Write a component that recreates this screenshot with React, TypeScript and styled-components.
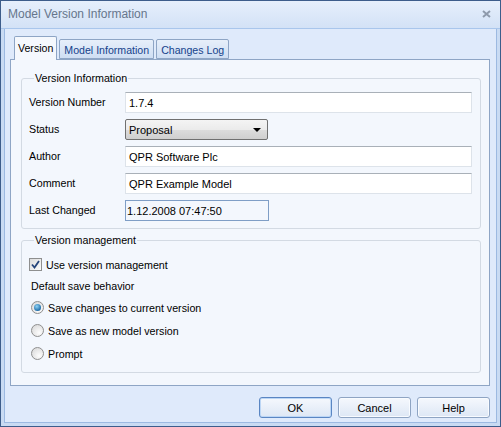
import styled, { createGlobalStyle } from 'styled-components';

const GlobalStyle = createGlobalStyle`
    html, body {
        margin: 0;
        padding: 0;
        background: #dfeafb;
    }

    body {
        font-family: "Liberation Sans", Arial, sans-serif;
        font-size: 10.7px;
        color: #000;
    }
`;

const Window = styled.div`
    width: 501px;
    height: 427px;
    box-sizing: border-box;
    border: 1px solid #3d5d8b;
    display: flex;
    flex-direction: column;
    background: #dfeafb;
`;

const TitleBar = styled.div`
    height: 28px;
    box-sizing: border-box;
    display: flex;
    align-items: center;
    justify-content: space-between;
    padding: 0 9px 1px 7px;
    background: linear-gradient(#e6effc, #d3e2f6);
    border-bottom: 1px solid #a9c6ec;
    font-size: 12px;
    color: #66768c;
`;

const Body = styled.div`
    flex: 1;
    display: flex;
    flex-direction: column;
    border: 3px solid #c9dbf3;
    border-top: none;
    box-shadow: inset 1px 0 #9cb9e1, inset -1px 0 #9cb9e1, inset 0 -1px #9cb9e1;
    padding: 7px 7px 5px 6px;
`;

const TabStrip = styled.div`
    display: flex;
    align-items: flex-end;
    gap: 2px;
    padding-left: 4px;
    height: 23px;
    position: relative;
    z-index: 1;
`;

const Tab = styled.div<{ $active?: boolean }>`
    box-sizing: border-box;
    height: ${p => (p.$active ? '24px' : '20px')};
    margin-bottom: ${p => (p.$active ? '-1px' : '0')};
    padding: ${p => (p.$active ? '0 3px 1px' : '1px 4px 0')};
    display: flex;
    align-items: center;
    border: 1px solid #8ea5c5;
    border-bottom: ${p => (p.$active ? 'none' : '1px solid #8ea5c5')};
    border-radius: 2px 2px 0 0;
    background: ${p => (p.$active ? '#f5f8fd' : 'linear-gradient(#e7effa, #cfdef3)')};
    color: ${p => (p.$active ? '#000' : '#15428b')};
    font-size: 10.6px;
`;

const Panel = styled.div`
    height: 327px;
    box-sizing: border-box;
    border: 1px solid #8ea5c5;
    background: #f3f7fd;
    padding: 12px 8px 0 10px;
    display: flex;
    flex-direction: column;
    gap: 5px;
`;

const Group = styled.fieldset`
    margin: 0;
    border: 1px solid #d3dae3;
    border-radius: 3px;
    padding: 0 8px 7px 7px;
`;

const Legend = styled.legend`
    padding: 0 1px;
    margin-left: 5px;
    line-height: 13px;
`;

const FieldGrid = styled.div`
    display: grid;
    grid-template-columns: 96px 1fr;
    row-gap: 6px;
    align-items: center;
    padding-top: 7px;
`;

const Label = styled.span`
    padding-bottom: 2px;
`;

const TextBox = styled.div<{ $width?: number }>`
    box-sizing: border-box;
    height: 21px;
    width: ${p => (p.$width ? `${p.$width}px` : 'auto')};
    display: flex;
    align-items: center;
    padding-left: 3px;
    background: #fff;
    border: 1px solid #dde3ea;
    border-top-color: #a9b0b8;
    font-size: 11px;
`;

const ReadOnlyBox = styled(TextBox)`
    background: #f3f7fd;
    border: 1px solid #7f9ec6;
    padding-left: 1px;
`;

const Select = styled.div`
    box-sizing: border-box;
    height: 21px;
    width: 143px;
    display: flex;
    align-items: center;
    justify-content: space-between;
    padding: 0 6px 0 3px;
    border: 1px solid #707070;
    border-radius: 2px;
    background: linear-gradient(#f4f4f4 0%, #ebebeb 50%, #dddddd 51%, #cfcfcf 100%);
    font-size: 11px;
`;

const Arrow = styled.span`
    width: 0;
    height: 0;
    border-left: 4px solid transparent;
    border-right: 4px solid transparent;
    border-top: 4px solid #000;
`;

const OptionList = styled.div`
    display: flex;
    flex-direction: column;
    padding-top: 7px;
`;

const OptionRow = styled.div<{ $h: number; $indent?: number }>`
    height: ${p => p.$h}px;
    display: flex;
    align-items: center;
    gap: 4px;
    padding-left: ${p => p.$indent ?? 0}px;
`;

const CheckBox = styled.span`
    width: 13px;
    height: 13px;
    box-sizing: border-box;
    border: 1px solid #8e8f8f;
    background: linear-gradient(135deg, #dcdcdc, #fbfbfb);
    display: flex;
    align-items: center;
    justify-content: center;
`;

const Radio = styled.span<{ $on?: boolean }>`
    width: 13px;
    height: 13px;
    box-sizing: border-box;
    border-radius: 50%;
    border: 1px solid #8f8f8f;
    background: radial-gradient(circle at 65% 70%, #fdfdfd, #d5d5d5);
    display: flex;
    align-items: center;
    justify-content: center;

    &::after {
        content: '';
        display: ${p => (p.$on ? 'block' : 'none')};
        width: 7px;
        height: 7px;
        border-radius: 50%;
        background: radial-gradient(circle at 40% 35%, #8fd3f5, #1f6eaa 70%, #17466f);
    }
`;

const ButtonRow = styled.div`
    display: flex;
    justify-content: flex-end;
    gap: 6px;
    margin-top: 11px;
    padding-right: 0;
`;

const Button = styled.div<{ $default?: boolean }>`
    width: 73px;
    height: 21px;
    box-sizing: border-box;
    display: flex;
    align-items: center;
    justify-content: center;
    border: 1px solid ${p => (p.$default ? '#5a86c3' : '#8ea4c3')};
    border-radius: 3px;
    background: linear-gradient(#f5f8fd, #dde7f5);
    box-shadow: ${p => (p.$default ? 'inset 0 0 0 1px #bcd6f5' : 'inset 0 0 0 1px #f8fbff')};
    font-size: 11px;
`;

const CloseIcon = () => (
    <svg width="9" height="8" viewBox="0 0 9 8">
        <path d="M1 1 L8 7 M8 1 L1 7" stroke="#8e9aab" strokeWidth="2" />
    </svg>
);

const CheckMark = () => (
    <svg width="9" height="9" viewBox="0 0 9 9">
        <path d="M1 4.5 L3.5 7.5 L8 1" fill="none" stroke="#25447a" strokeWidth="1.8" />
    </svg>
);

const fields = [
    { label: 'Version Number', value: '1.7.4' },
    { label: 'Status', value: 'Proposal', select: true },
    { label: 'Author', value: 'QPR Software Plc' },
    { label: 'Comment', value: 'QPR Example Model' },
    { label: 'Last Changed', value: '1.12.2008 07:47:50', readOnly: true },
];

export default function App() {
    return (
        <>
            <GlobalStyle />
            <Window>
                <TitleBar>
                    <span>Model Version Information</span>
                    <CloseIcon />
                </TitleBar>
                <Body>
                    <TabStrip>
                        <Tab $active>Version</Tab>
                        <Tab>Model Information</Tab>
                        <Tab>Changes Log</Tab>
                    </TabStrip>
                    <Panel>
                        <Group>
                            <Legend>Version Information</Legend>
                            <FieldGrid>
                                {fields.map(f => (
                                    <FieldRow key={f.label} {...f} />
                                ))}
                            </FieldGrid>
                        </Group>
                        <Group>
                            <Legend>Version management</Legend>
                            <OptionList>
                                <OptionRow $h={21}>
                                    <CheckBox>
                                        <CheckMark />
                                    </CheckBox>
                                    Use version management
                                </OptionRow>
                                <OptionRow $h={21} $indent={2}>Default save behavior</OptionRow>
                                <OptionRow $h={23} $indent={2}>
                                    <Radio $on />
                                    Save changes to current version
                                </OptionRow>
                                <OptionRow $h={23} $indent={2}>
                                    <Radio />
                                    Save as new model version
                                </OptionRow>
                                <OptionRow $h={23} $indent={2}>
                                    <Radio />
                                    Prompt
                                </OptionRow>
                            </OptionList>
                        </Group>
                    </Panel>
                    <ButtonRow>
                        <Button $default>OK</Button>
                        <Button>Cancel</Button>
                        <Button>Help</Button>
                    </ButtonRow>
                </Body>
            </Window>
        </>
    );
}

function FieldRow({ label, value, select, readOnly }: { label: string; value: string; select?: boolean; readOnly?: boolean }) {
    let box;
    if (select) {
        box = (
            <Select>
                {value}
                <Arrow />
            </Select>
        );
    } else if (readOnly) {
        box = <ReadOnlyBox $width={144}>{value}</ReadOnlyBox>;
    } else {
        box = <TextBox>{value}</TextBox>;
    }
    return (
        <>
            <Label>{label}</Label>
            <div>{box}</div>
        </>
    );
}
